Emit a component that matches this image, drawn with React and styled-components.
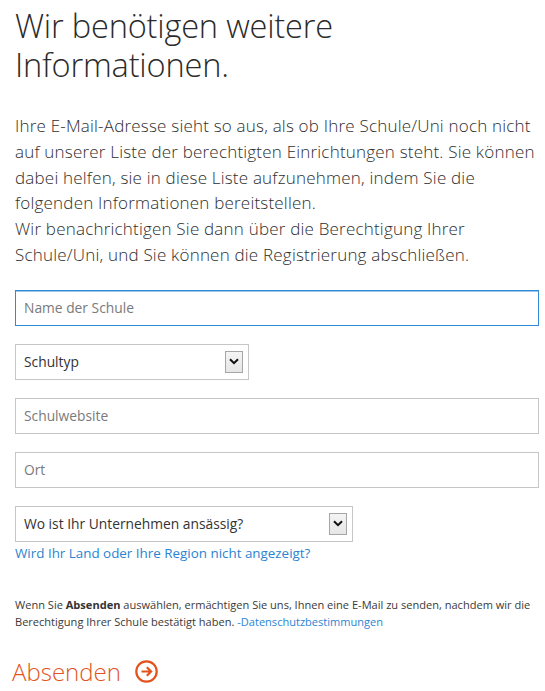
import React from "react";
import styled, { createGlobalStyle } from "styled-components";

const Global = createGlobalStyle`
  html, body { margin: 0; padding: 0; background: #ffffff; }
  body { font-family: "Open Sans", "Noto Sans", sans-serif; color: #333; }
  * { box-sizing: border-box; }
`;

const Page = styled.main`
  width: 545px;
  min-height: 691px;
  padding: 6px 6px 0 15px;
  background: #fff;
`;

const Title = styled.h1`
  margin: 0;
  font-weight: 300;
  font-size: 32.6px;
  line-height: 39px;
  color: #2b2b2b;
  letter-spacing: -0.2px;
`;

const Intro = styled.p`
  margin: 29px 0 22px;
  font-size: 17px;
  line-height: 25.8px;
  font-weight: 300;
  letter-spacing: 0.2px;
  color: #2e2e2e;
  width: 528px;
`;

const Form = styled.form`
  display: flex;
  flex-direction: column;
  gap: 18px;
`;

const Field = styled.input`
  display: block;
  width: ${(p) => p.$width || 524}px;
  height: 36px;
  border: 1px solid ${(p) => (p.$focused ? "#2f8ad8" : "#c6c6c6")};
  box-shadow: ${(p) => (p.$focused ? "inset 0 1px 0 #9ac6ee" : "none")};
  padding: 0 8px;
  font-family: inherit;
  font-size: 13.8px;
  font-weight: 400;
  color: #333;
  background: #fff;
  outline: none;
  &::placeholder { color: #7a7a7a; }
`;

const SelectBox = styled.div`
  position: relative;
  display: flex;
  align-items: center;
  width: ${(p) => p.$width}px;
  height: 36px;
  border: 1px solid #c6c6c6;
  background: #fff;
  padding: 0 8px;
  font-size: 13.8px;
  color: #333;
`;

const ArrowButton = styled.span`
  position: absolute;
  right: 5px;
  top: 50%;
  transform: translateY(-50%);
  width: 18px;
  height: 22px;
  border: 1px solid #a6a6a6;
  background: linear-gradient(#f4f4f4, #e6e6e6);
  display: flex;
  align-items: center;
  justify-content: center;
`;

const CountryGroup = styled.div`
  display: flex;
  flex-direction: column;
  gap: 2px;
`;

const Link = styled.a`
  color: #2a84d2;
  font-size: 13.4px;
  text-decoration: none;
  line-height: 18px;
`;

const Notice = styled.p`
  margin: 34px 0 0;
  font-size: 11.05px;
  line-height: 17px;
  color: #3a3a3a;
  b { font-weight: 700; color: #333; }
`;

const InlineLink = styled.a`
  color: #2a84d2;
  text-decoration: none;
`;

const SubmitButton = styled.button`
  display: flex;
  align-items: center;
  gap: 14px;
  margin: 25px 0 0 -3px;
  padding: 0;
  border: 0;
  background: none;
  font-family: inherit;
  font-weight: 300;
  font-size: 24px;
  color: #e2531d;
  cursor: pointer;
`;

function Chevron() {
  return (
    <svg width="10" height="7" viewBox="0 0 10 7">
      <path d="M1 1.2 L5 5.2 L9 1.2" fill="none" stroke="#111" strokeWidth="2" />
    </svg>
  );
}

function Select({ label, width }) {
  return (
    <SelectBox $width={width}>
      {label}
      <ArrowButton>
        <Chevron />
      </ArrowButton>
    </SelectBox>
  );
}

function ArrowCircle() {
  return (
    <svg width="23" height="23" viewBox="0 0 23 23">
      <circle cx="11.5" cy="11.5" r="10.2" fill="none" stroke="#e2531d" strokeWidth="2.2" />
      <path d="M6.5 11.5 H16 M11.8 7.2 L16.1 11.5 L11.8 15.8" fill="none" stroke="#e2531d" strokeWidth="2.2" />
    </svg>
  );
}

export default function App() {
  return (
    <>
      <Global />
      <Page>
        <Title>
          Wir benötigen weitere
          <br />
          Informationen.
        </Title>
        <Intro>
          Ihre E-Mail-Adresse sieht so aus, als ob Ihre Schule/Uni noch nicht auf unserer Liste der
          berechtigten Einrichtungen steht. Sie können dabei helfen, sie in diese Liste aufzunehmen,
          indem Sie die folgenden Informationen bereitstellen.
          <br />
          Wir benachrichtigen Sie dann über die Berechtigung Ihrer Schule/Uni, und Sie können die
          Registrierung abschließen.
        </Intro>
        <Form onSubmit={(e) => e.preventDefault()}>
          <Field $focused placeholder="Name der Schule" />
          <Select label="Schultyp" width={234} />
          <Field placeholder="Schulwebsite" />
          <Field placeholder="Ort" />
          <CountryGroup>
            <Select label="Wo ist Ihr Unternehmen ansässig?" width={338} />
            <Link href="#">Wird Ihr Land oder Ihre Region nicht angezeigt?</Link>
          </CountryGroup>
        </Form>
        <Notice>
          Wenn Sie <b>Absenden</b> auswählen, ermächtigen Sie uns, Ihnen eine E-Mail zu senden,
          nachdem wir die Berechtigung Ihrer Schule bestätigt haben.{" "}
          <InlineLink href="#">-Datenschutzbestimmungen</InlineLink>
        </Notice>
        <SubmitButton type="button">
          Absenden
          <ArrowCircle />
        </SubmitButton>
      </Page>
    </>
  );
}
